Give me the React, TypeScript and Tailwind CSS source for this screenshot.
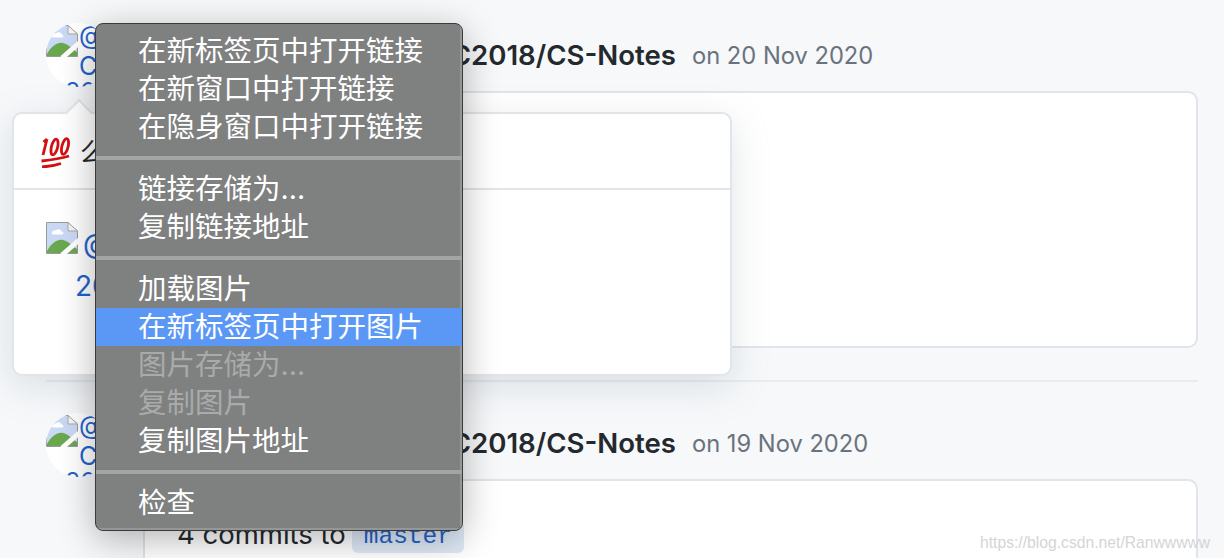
import React from "react";

function Broken() {
  return (
    <svg width="32" height="32" viewBox="0 0 32 32" className="shrink-0 block">
      <path d="M0.5 9 L0.5 31.5 L31.5 31.5 L31.5 9 L22 0.5 L0.5 0.5 Z" fill="#c9d8f4" stroke="#9a9a9a" strokeWidth="1" />
      <path d="M22 0.5 L22 9 L31.5 9 Z" fill="#f4f4f4" stroke="#a8a8a8" strokeWidth="1" />
      <path d="M1 31 L1 29 C6 20 12 17 17 18 C21 19 25 22 28 25 L31 27 L31 31 Z" fill="#6aa84f" />
      <path d="M6 11 C6 8.5 9 8 10 8.5 C11.5 6.5 15 7 15.5 9.5 C17.5 9.5 18 12 16.5 12.5 L7 12.5 C5.5 12.5 5 11.5 6 11 Z" fill="#ffffff" />
      <path d="M16 33 L33 18" stroke="#ffffff" strokeWidth="5" />
    </svg>
  );
}

function Hundred() {
  return (
    <svg width="30" height="31" viewBox="0 0 30 31" className="shrink-0 block" fill="none" stroke="#d40f12">
      <path d="M6 2 L2 18 M6 2 L2.5 5" strokeWidth="2.8" />
      <ellipse cx="13.5" cy="10" rx="3.1" ry="8" transform="rotate(14 13.5 10)" strokeWidth="2.8" />
      <ellipse cx="24" cy="9.5" rx="3.1" ry="8" transform="rotate(14 24 9.5)" strokeWidth="2.8" />
      <path d="M0.5 24 C10 23 20 21.5 28 19" strokeWidth="2.8" />
      <path d="M1 30 C8 29.5 14 28.5 20 26.5" strokeWidth="2.8" />
    </svg>
  );
}

function Avatar({ className }: { className: string }) {
  return (
    <div className={"w-[64px] h-[64px] rounded-full bg-white overflow-hidden shrink-0 text-[25px] leading-[26px] text-[#1f63cc] " + className}>
      <div className="flex items-start pt-[2px] h-[30px]">
        <Broken />
        <span className="ml-[1px]">@C</span>
      </div>
      <div className="pl-[33px] whitespace-nowrap">Cy</div>
      <div className="pl-[19px] whitespace-nowrap">2018</div>
    </div>
  );
}

function Entry({ date, children, top }: { date: string; children?: React.ReactNode; top: string }) {
  return (
    <div className="flex">
      <Avatar className={top} />
      <div className="flex-1 ml-[33px] min-w-0">
        <div className="h-[62px] pt-[2px] flex items-center whitespace-nowrap">
          <span className="text-[27.6px] font-semibold text-[#24292e] w-[533px] text-right">CyC2018/CS-Notes</span>
          <span className="text-[23.7px] text-[#6a737d] ml-[16px]">{date}</span>
        </div>
        {children}
      </div>
    </div>
  );
}

function Row({ children, active, disabled }: { children: React.ReactNode; active?: boolean; disabled?: boolean }) {
  return (
    <div
      className={
        "relative h-[38px] leading-[38px] pl-[42px] text-[28.5px] whitespace-nowrap " +
        (active ? "bg-[#5b98f6] text-white " : disabled ? "text-[#a9aaaa] " : "text-white ")
      }
    >
      {children}
    </div>
  );
}

function Sep() {
  return <div className="relative h-[4px] bg-[#a3a4a4] my-[10px]" />;
}

export default function App() {
  return (
    <div
      className="relative w-[1224px] h-[558px] overflow-hidden bg-[#f6f8fa] pt-[24px] pl-[45px] pr-[26px]"
      style={{ fontFamily: 'Inter, "Noto Sans CJK SC", sans-serif' }}
    >
      <Entry date="on 20 Nov 2020" top="ml-[1px] -mt-[1px]">
        <div className="mt-[5px] h-[257px] bg-white border-2 border-[#e1e4e8] rounded-[10px]" />
      </Entry>
      <div className="h-[2px] bg-[#e8ebef] mt-[32px] mb-[30px]" />
      <Entry date="on 19 Nov 2020" top="ml-[1px] mt-[1px]">
        <div className="mt-[5px] h-[200px] bg-white border-2 border-[#e1e4e8] rounded-[10px] pl-[32px] pt-[33px]">
          <div className="flex items-center text-[27.5px] text-[#24292e] whitespace-nowrap">
            <span>4 commits to</span>
            <code
              className="ml-[6px] mt-[4px] px-[12px] h-[32px] leading-[32px] rounded-[6px] bg-[#dfeaf7] text-[#1f63cc] text-[24.5px]"
              style={{ fontFamily: '"Liberation Mono", monospace' }}
            >
              master
            </code>
          </div>
        </div>
      </Entry>

      {/* hover card */}
      <div className="absolute left-[12px] top-[112px] w-[720px] h-[264px] bg-white border-2 border-[#e1e4e8] rounded-[10px] shadow-[0_10px_36px_rgba(149,157,165,0.28)]">
        <div className="absolute left-[55px] -top-[11px] w-[20px] h-[20px] rotate-45 bg-white border-l-2 border-t-2 border-[#e1e4e8]" />
        <div className="relative h-[72px] box-content border-b-2 border-[#e1e4e8] flex items-center pl-[27px] pt-[2px] text-[26px] text-[#24292e]">
          <Hundred />
          <span className="ml-[9px]">么</span>
        </div>
        <div className="pl-[32px] pt-[32px] text-[#1f63cc] text-[28px]">
          <div className="flex items-start h-[32px]">
            <Broken />
            <span className="ml-[5px] mt-[8px] leading-[34px]">@C</span>
          </div>
          <div className="pl-[29px] mt-[15px] leading-[34px]">2018</div>
        </div>
      </div>

      {/* context menu */}
      <div className="absolute left-[95px] top-[23px] w-[368px] h-[508px] rounded-[8px] bg-[#7f8080] border border-[#3b3b3b] pt-[8px] overflow-hidden shadow-[0_8px_36px_rgba(0,0,0,0.3)]">
        <div className="absolute right-0 top-0 bottom-0 w-[2px] bg-[#959696]" />
        <div className="absolute left-0 right-0 bottom-0 h-[2px] bg-[#959696]" />
        <Row>在新标签页中打开链接</Row>
        <Row>在新窗口中打开链接</Row>
        <Row>在隐身窗口中打开链接</Row>
        <Sep />
        <Row>链接存储为...</Row>
        <Row>复制链接地址</Row>
        <Sep />
        <Row>加载图片</Row>
        <Row active>在新标签页中打开图片</Row>
        <Row disabled>图片存储为...</Row>
        <Row disabled>复制图片</Row>
        <Row>复制图片地址</Row>
        <Sep />
        <Row>检查</Row>
      </div>

      <div
        className="absolute left-[980px] top-[531px] text-[15.7px] text-[#d3d5d8] whitespace-nowrap"
        style={{ fontFamily: '"Liberation Sans", sans-serif' }}
      >
        https://blog.csdn.net/Ranwwwww
      </div>
    </div>
  );
}
